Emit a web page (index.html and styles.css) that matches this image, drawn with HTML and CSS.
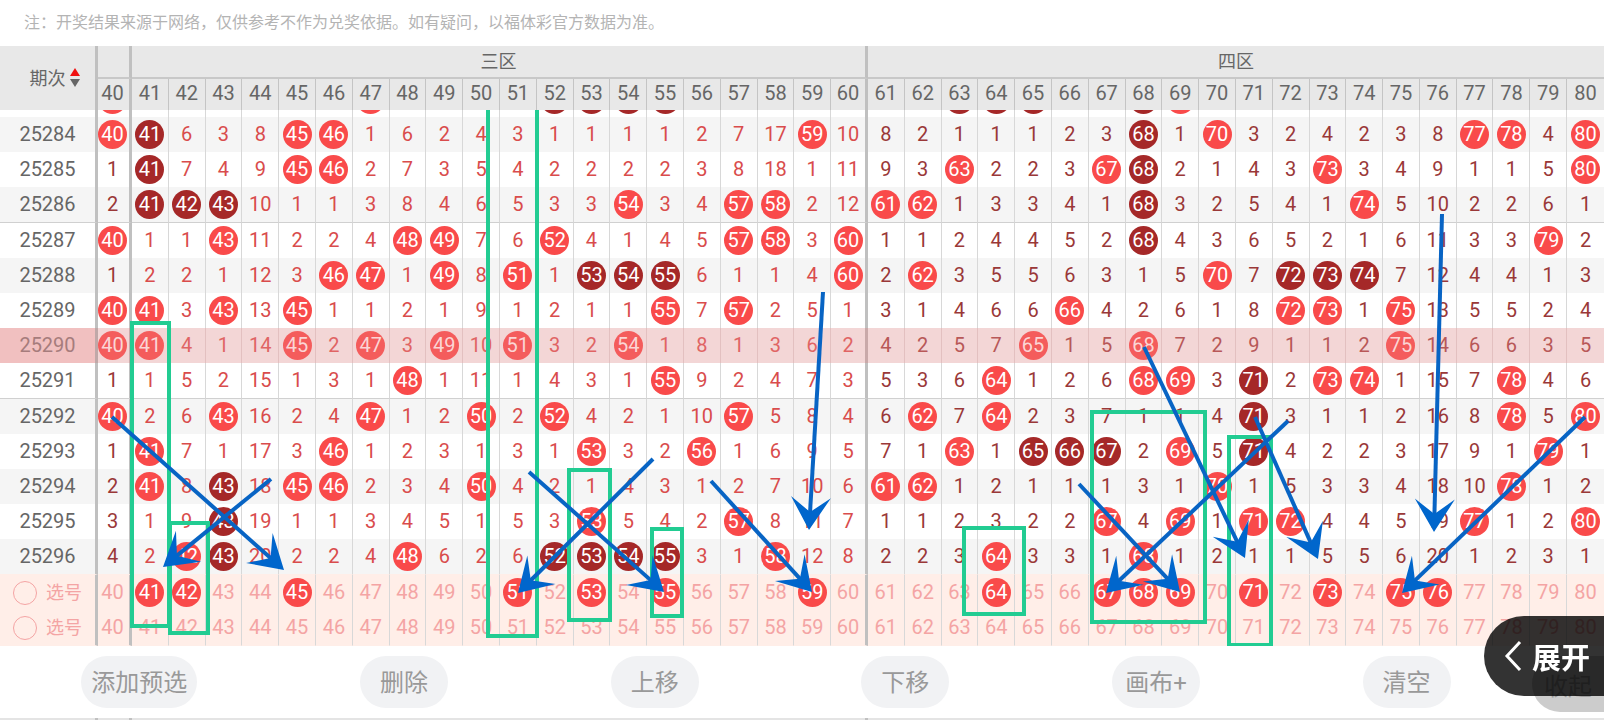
FILE: index.html
```html
<!DOCTYPE html>
<html lang="zh-CN">
<head>
    <meta charset="UTF-8">
    <meta content="width=device-width, initial-scale=1.0" name="viewport">
    <link rel="stylesheet" href="styles.css">
    <title>走势图</title>
</head>
<body>

<p class="note">注：开奖结果来源于网络，仅供参考不作为兑奖依据。如有疑问，以福体彩官方数据为准。</p>

<main class="chart">
    <table class="trend">
        <colgroup id="cols"></colgroup>
        <thead>
        <tr class="zones">
            <th class="issue" rowspan="2">
                <div class="sort">
                    期次
                    <svg height="20" viewBox="0 0 10 20" width="10">
                        <path d="M5 0L10 8H0Z" fill="#f01010"/>
                        <path d="M5 19L10 11H0Z" fill="#666"/>
                    </svg>
                </div>
            </th>
            <th class="zone-end"></th>
            <th class="zone-end" colspan="20">三区</th>
            <th colspan="20">四区</th>
        </tr>
        <tr class="numbers" id="numbers"></tr>
        </thead>
        <tbody id="rows"></tbody>
    </table>

    <!-- Drawing layer: boxes and arrows -->
    <svg class="canvas" preserveAspectRatio="none" viewBox="0 0 1604 536">
        <g class="boxes">
            <rect height="303" width="37" x="132" y="213"/>
            <rect height="110" width="38" x="170" y="413"/>
            <rect height="546" width="49" x="488" y="-20"/>
            <rect height="150" width="41" x="569" y="360"/>
            <rect height="87" width="30" x="652" y="419"/>
            <rect height="86" width="60" x="964" y="418"/>
            <rect height="210" width="113" x="1092" y="302"/>
            <rect height="208" width="42" x="1229" y="327"/>
        </g>
        <g class="arrows" id="arrows"></g>
    </svg>
</main>

<div class="toolbar">
    <div class="actions">
        <button type="button">添加预选</button>
        <button type="button">删除</button>
        <button type="button">上移</button>
        <button type="button">下移</button>
        <button type="button">画布+</button>
        <button type="button">清空</button>
    </div>
    <button class="collapse" type="button">收起</button>
</div>

<div class="next-table"><i></i><i></i><i></i><i></i></div>

<button class="expand" type="button">
    <svg height="32" viewBox="0 0 18 32" width="18">
        <path d="M16 2L3 16L16 30" fill="none" stroke="#fff" stroke-width="3"/>
    </svg>
    展开
</button>

<script src="script.js"></script>
</body>
</html>
```

FILE: styles.css
```css
body {
    margin: 0;
    background-color: #fff;
    font-family: Roboto, "Noto Sans CJK SC", sans-serif;
    overflow: hidden;
}

button {
    border: 0;
    padding: 0;
    font-family: inherit;
    cursor: pointer;
}

.note {
    margin: 0;
    padding-left: 24px;
    font-size: 16px;
    line-height: 46px;
    color: #b4b4b4;
}

.chart {
    position: relative;
}

/* Table */
.trend {
    width: 100%;
    table-layout: fixed;
    border-spacing: 0;
    font-size: 20px;
    text-align: center;
}

.col-issue {
    width: 98px;
}

.col-first {
    width: 34px;
}

.trend th,
.trend td {
    padding: 0;
    font-weight: 400;
}

.trend thead th {
    background-color: #e8e8e8;
    color: #666;
    border-right: 1px solid #c4c4c4;
}

.zones th {
    height: 31px;
    border-bottom: 2px solid #c8c8c8;
    font-size: 18px;
    line-height: 31px;
}

.numbers th {
    height: 31px;
    line-height: 29px;
    vertical-align: top;
}

.trend thead th:last-child,
.trend tbody td:last-child {
    border-right: 0;
}

.trend thead .issue {
    border-bottom: 0;
}

.trend .issue,
.trend thead .zone-end,
.trend tbody .zone-end {
    border-right: 3px solid #c0c0c0;
}

.numbers th:first-child,
.trend tbody td:nth-child(2) {
    padding-right: 2px;
}

.sort {
    display: flex;
    justify-content: center;
    align-items: center;
    gap: 4px;
    padding-left: 14px;
}

.trend tbody td,
.trend tbody th {
    height: 35px;
    line-height: 35px;
}

.trend tbody td {
    border-right: 1px solid #d8d8d8;
    color: #9a3838;
}

.trend tbody .zone3 {
    color: #d94c4c;
}

.trend tbody .issue {
    color: #666;
}

.odd {
    background-color: #f5f5f5;
}

.trend .line td,
.trend .line th {
    border-top: 1px solid #d0d0d0;
}

.ball {
    display: block;
    width: 29px;
    height: 29px;
    margin: 0 auto;
    border-radius: 50%;
    background-color: #f94a4a;
    color: #fff;
    line-height: 29px;
}

.ball.run {
    background-color: #a52828;
}

/* Row scrolled under the header */
.trend .cut td,
.trend .cut th {
    height: 7px;
    line-height: 7px;
}

.clip {
    display: flex;
    justify-content: center;
    align-items: flex-end;
    height: 4px;
    padding-bottom: 3px;
    overflow: hidden;
}

.clip .ball {
    flex: none;
}

/* Highlighted issue */
.trend .active td {
    background-color: #f3d6d6;
    border-color: #e3c0c0;
    color: #b85858;
}

.trend .active .zone3 {
    color: #e06464;
}

.trend .active .zone-end {
    border-right-color: #c9a9a9;
}

.trend .active .issue {
    background-color: #f1c0c0;
    border-right-color: #c0a8a8;
    color: #a67c7c;
}

.active .ball {
    background-color: #f45c5c;
    color: #fbd5d5;
}

/* Picks */
.trend .pick {
    background-color: #ffeee8;
}

.trend .pick td,
.trend .pick .zone3,
.trend .pick .issue {
    color: #f4a4a4;
}

.trend .pick:nth-last-child(2) td,
.trend .pick:nth-last-child(2) th {
    border-top: 1px solid #ffeee8;
}

.trend .pick:last-child td,
.trend .pick:last-child th {
    border-bottom: 1px solid #ffeee8;
}

.pick label {
    display: flex;
    justify-content: center;
    align-items: center;
    gap: 9px;
    font-size: 18px;
}

.pick input {
    appearance: none;
    box-sizing: border-box;
    width: 24px;
    height: 24px;
    margin: 0;
    border: 1px solid #f4a4a4;
    border-radius: 50%;
}

/* Drawing layer */
.canvas {
    position: absolute;
    left: 0;
    bottom: 0;
    width: 100%;
    height: 536px;
    overflow: hidden;
    pointer-events: none;
}

.boxes rect {
    fill: none;
    stroke: #22cc92;
    stroke-width: 4;
}

.arrows line {
    stroke: #0864c4;
    stroke-width: 4;
}

.arrows polygon {
    fill: #0066cc;
}

/* Toolbar */
.toolbar {
    display: flex;
    align-items: flex-start;
    height: 62px;
    padding-top: 10px;
}

.actions {
    display: flex;
    flex: 1;
    justify-content: space-around;
}

.toolbar button {
    font-size: 24px;
    color: #999;
}

.actions button {
    min-width: 88px;
    height: 52px;
    padding: 0 10px 3px;
    border-radius: 26px;
    background-color: #f1f2f4;
}

.toolbar .collapse {
    width: 72px;
    height: 56px;
    border-radius: 28px 0 0 28px;
    background-color: #ccc;
}

.next-table {
    display: grid;
    grid-template-columns: 98px 34px 1fr 1fr;
    height: 2px;
    background-color: #e4e4e4;
}

.next-table i {
    border-right: 3px solid #c0c0c0;
}

.next-table i:last-child {
    border-right: 0;
}

.expand {
    position: fixed;
    right: 0;
    bottom: 24px;
    display: flex;
    justify-content: center;
    align-items: center;
    gap: 10px;
    width: 120px;
    height: 80px;
    padding-left: 6px;
    border-radius: 40px 0 0 40px;
    background-color: rgba(0, 0, 0, 0.8);
    color: #fff;
    font-size: 29px;
    font-weight: 700;
}
```

FILE: script.js
```js
const FIRST = 40;
const LAST = 80;
const ACTIVE = 25290;

// Drawn numbers by issue
const draws = [
    [25283, [40, 47, 52, 53, 54, 55, 63, 64, 65, 68, 69]],
    [25284, [40, 41, 45, 46, 59, 68, 70, 77, 78, 80]],
    [25285, [41, 45, 46, 63, 67, 68, 73, 80]],
    [25286, [41, 42, 43, 54, 57, 58, 61, 62, 68, 74]],
    [25287, [40, 43, 48, 49, 52, 57, 58, 60, 68, 79]],
    [25288, [46, 47, 49, 51, 53, 54, 55, 60, 62, 70, 72, 73, 74]],
    [25289, [40, 41, 43, 45, 55, 57, 66, 72, 73, 75]],
    [25290, [40, 41, 45, 47, 49, 51, 54, 65, 68, 75]],
    [25291, [48, 55, 64, 68, 69, 71, 73, 74, 78]],
    [25292, [40, 43, 47, 50, 52, 57, 62, 64, 71, 78, 80]],
    [25293, [41, 46, 53, 56, 63, 65, 66, 67, 69, 71, 79]],
    [25294, [41, 43, 45, 46, 50, 61, 62, 70, 78]],
    [25295, [43, 53, 57, 67, 69, 71, 72, 77, 80]],
    [25296, [42, 43, 48, 52, 53, 54, 55, 58, 64, 68]]
];

const picks = [
    [41, 42, 45, 51, 53, 55, 59, 64, 67, 68, 69, 71, 73, 75, 76],
    []
];

// Misses of 40..80 after the first issue
const missed = [
    0, 0, 5, 2, 7, 0, 0, 0, 5, 1, 3, 2, 0, 0, 0, 0, 1, 6, 16, 0, 9,
    7, 1, 0, 0, 0, 1, 2, 0, 0, 0, 2, 1, 3, 1, 2, 7, 0, 0, 3, 0
];

// x1, y1, x2, y2
const arrows = [
    [112, 307, 284, 460],
    [271, 369, 163, 457],
    [529, 362, 664, 482],
    [653, 349, 518, 483],
    [711, 371, 812, 482],
    [823, 182, 809, 420],
    [1442, 104, 1434, 422],
    [1144, 237, 1245, 448],
    [1255, 307, 1318, 449],
    [1288, 311, 1106, 483],
    [1079, 374, 1180, 482],
    [1585, 307, 1402, 483]
];

function isHit(row, n) {
    return row >= 0 && row < draws.length && draws[row][1].includes(n);
}

// Three or more in a line, down or across
function isRun(row, n) {
    let down = 1;
    let across = 1;
    for (let i = row - 1; isHit(i, n); i--) down++;
    for (let i = row + 1; isHit(i, n); i++) down++;
    for (let i = n - 1; isHit(row, i); i--) across++;
    for (let i = n + 1; isHit(row, i); i++) across++;
    return down > 2 || across > 2;
}

function cellClass(n) {
    const names = [];
    if (n > 40 && n <= 60) names.push('zone3');
    if (n % 20 === 0) names.push('zone-end');
    return names.join(' ');
}

function renderHead() {
    let cols = '<col class="col-issue"><col class="col-first">';
    let cells = '';
    for (let n = FIRST; n <= LAST; n++) {
        if (n > FIRST) cols += '<col>';
        cells += `<th class="${cellClass(n)}">${n}</th>`;
    }
    document.getElementById('cols').innerHTML = cols;
    document.getElementById('numbers').innerHTML = cells;
}

function renderRows() {
    let html = '';
    draws.forEach(([issue], row) => {
        const cut = row === 0;
        const names = [];
        if (cut) names.push('cut');
        if (row % 2 === 1) names.push('odd');
        if (issue === ACTIVE) names.push('active');
        if (issue % 5 === 2) names.push('line');
        html += `<tr class="${names.join(' ')}"><th class="issue">${cut ? '' : issue}</th>`;
        for (let n = FIRST; n <= LAST; n++) {
            let text;
            if (isHit(row, n)) {
                missed[n - FIRST] = 0;
                text = `<span class="ball${isRun(row, n) ? ' run' : ''}">${cut ? '' : n}</span>`;
            } else {
                text = cut ? '' : ++missed[n - FIRST];
            }
            html += `<td class="${cellClass(n)}">${cut ? `<div class="clip">${text}</div>` : text}</td>`;
        }
        html += '</tr>';
    });
    picks.forEach(list => {
        html += '<tr class="pick"><th class="issue"><label><input type="radio" name="pick">选号</label></th>';
        for (let n = FIRST; n <= LAST; n++) {
            html += `<td class="${cellClass(n)}">${list.includes(n) ? `<span class="ball">${n}</span>` : n}</td>`;
        }
        html += '</tr>';
    });
    document.getElementById('rows').innerHTML = html;
}

function renderArrows() {
    let html = '';
    arrows.forEach(([x1, y1, x2, y2]) => {
        const len = Math.hypot(x2 - x1, y2 - y1);
        const dx = (x2 - x1) / len;
        const dy = (y2 - y1) / len;
        const at = (back, side) => [x2 - dx * back - dy * side, y2 - dy * back + dx * side];
        const [ex, ey] = at(16, 0);
        html += `<line x1="${x1}" y1="${y1}" x2="${ex}" y2="${ey}"/>`;
        html += `<polygon points="${[at(0, 0), at(33, 20), at(18, 0), at(33, -20)].join(' ')}"/>`;
    });
    document.getElementById('arrows').innerHTML = html;
}

renderHead();
renderRows();
renderArrows();
```
